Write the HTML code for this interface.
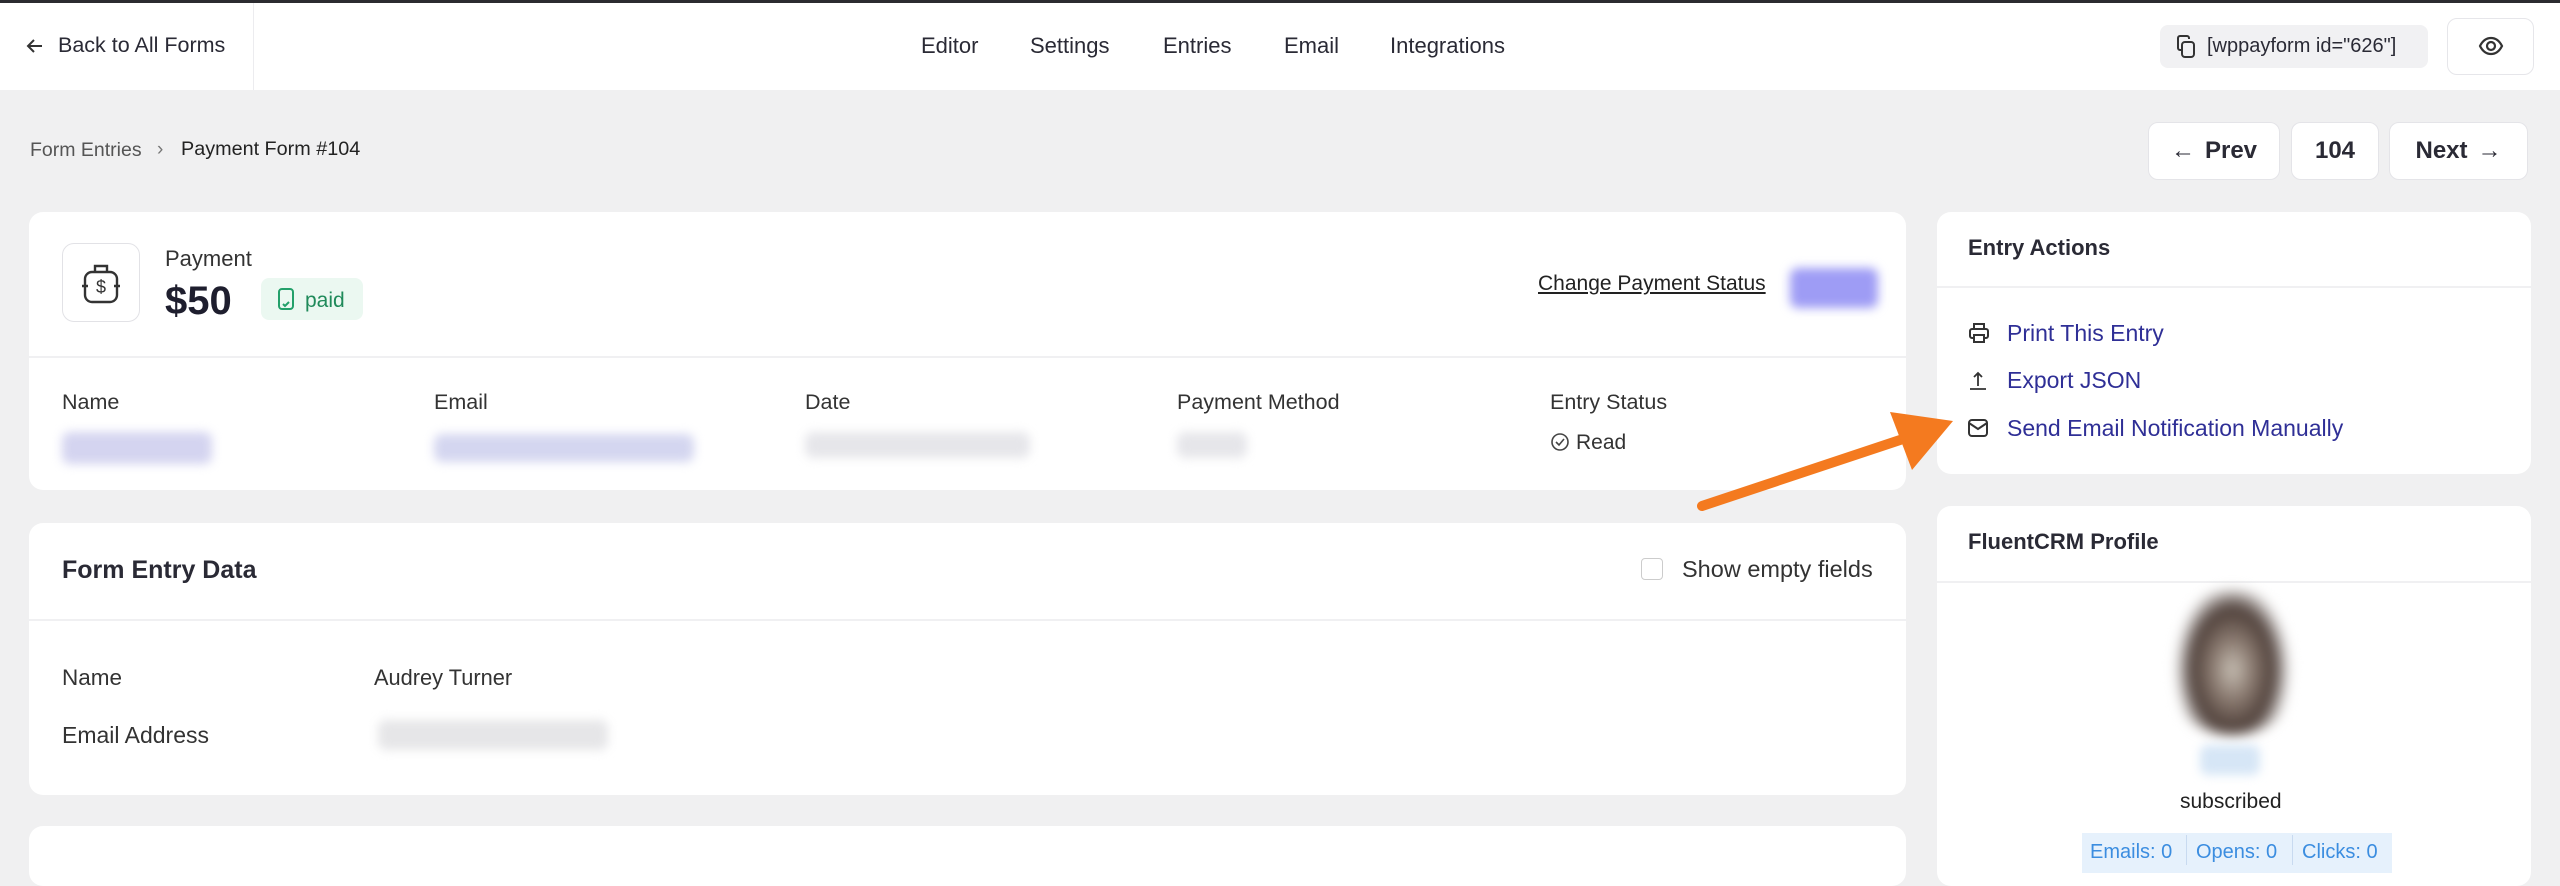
<!DOCTYPE html>
<html><head><meta charset="utf-8"><style>
*{box-sizing:border-box;margin:0;padding:0}
body{width:2560px;height:862px;overflow:hidden;background:#f0f0f1;font-family:"Liberation Sans",sans-serif;color:#1e1e2a;position:relative}
.a{position:absolute}
.card{position:absolute;background:#fff;border-radius:14px}
.t{position:absolute;white-space:nowrap;line-height:1}
.blur{position:absolute;border-radius:8px;filter:blur(5px)}
.btn{position:absolute;background:#fff;border:1.5px solid #e4e4e8;border-radius:10px;font-size:24px;font-weight:bold;color:#2a2a35;display:flex;align-items:center;justify-content:center;gap:10px}
.lnk{color:#2f2f96;font-size:23px}
</style></head><body>
<div class="a" style="left:0;top:0;width:2560px;height:3px;background:#2b2b30"></div>
<div class="a" style="left:0;top:3px;width:2560px;height:87px;background:#fff"></div>
<div class="a" style="left:253px;top:3px;width:1px;height:87px;background:#ececef"></div>
<svg class="a" style="left:26px;top:38px" width="18" height="16" viewBox="0 0 18 16"><path d="M8 2 2 8l6 6M2 8h14" stroke="#333" stroke-width="2" fill="none"/></svg>
<div class="t" style="left:58px;top:35px;font-size:21.5px;color:#2a2a35">Back to All Forms</div>
<div class="t" style="left:921px;top:35px;font-size:22px;color:#2a2a35">Editor</div>
<div class="t" style="left:1030px;top:35px;font-size:22px;color:#2a2a35">Settings</div>
<div class="t" style="left:1163px;top:35px;font-size:22px;color:#2a2a35">Entries</div>
<div class="t" style="left:1284px;top:35px;font-size:22px;color:#2a2a35">Email</div>
<div class="t" style="left:1390px;top:35px;font-size:22px;color:#2a2a35">Integrations</div>
<div class="a" style="left:2160px;top:25px;width:268px;height:43px;background:#f1f1f3;border-radius:8px"></div>
<svg class="a" style="left:2175px;top:34px" width="22" height="26" viewBox="0 0 22 26"><rect x="7" y="8" width="12" height="15" rx="3" fill="none" stroke="#333" stroke-width="2"/><path d="M14 5V4a2 2 0 0 0-2-2H5a2 2 0 0 0-2 2v10a2 2 0 0 0 2 2h2" fill="none" stroke="#333" stroke-width="2"/></svg>
<div class="t" style="left:2207px;top:36px;font-size:20px;color:#2a2a35">[wppayform id="626"]</div>
<div class="a" style="left:2447px;top:18px;width:87px;height:57px;background:#fff;border:1.5px solid #e6e6ea;border-radius:10px"></div>
<svg class="a" style="left:2478px;top:33px" width="26" height="26" viewBox="0 0 26 26"><path d="M2 13C5 7 9 5 13 5s8 2 11 8c-3 6-7 8-11 8s-8-2-11-8z" fill="none" stroke="#333" stroke-width="2.2"/><circle cx="13" cy="13" r="4" fill="none" stroke="#333" stroke-width="2.2"/></svg>

<div class="t" style="left:30px;top:141px;font-size:19.5px;color:#555">Form Entries</div>
<div class="t" style="left:157px;top:140px;font-size:19px;color:#777">›</div>
<div class="t" style="left:181px;top:140px;font-size:19.8px;color:#222">Payment Form #104</div>

<div class="btn" style="left:2148px;top:122px;width:132px;height:58px"><span style="font-weight:normal">←</span><span>Prev</span></div>
<div class="btn" style="left:2291px;top:122px;width:88px;height:58px">104</div>
<div class="btn" style="left:2389px;top:122px;width:139px;height:58px"><span>Next</span><span style="font-weight:normal">→</span></div>

<div class="card" style="left:29px;top:212px;width:1877px;height:278px"></div>
<div class="a" style="left:29px;top:356px;width:1877px;height:2px;background:#f0f0f2"></div>
<div class="a" style="left:62px;top:243px;width:78px;height:79px;border:1.5px solid #e2e2e6;border-radius:12px;background:#fff"></div>
<svg class="a" style="left:80px;top:260px" width="42" height="46" viewBox="0 0 42 46"><path d="M15 12V6h12v6" fill="none" stroke="#333" stroke-width="2.4"/><rect x="5" y="12" width="32" height="30" rx="7" fill="none" stroke="#333" stroke-width="2.4"/><path d="M2 26h6M34 26h6" stroke="#333" stroke-width="2.4"/><text x="21" y="33" font-size="18" text-anchor="middle" font-family="Liberation Sans" fill="#333">$</text></svg>
<div class="t" style="left:165px;top:248px;font-size:22px;color:#333">Payment</div>
<div class="t" style="left:165px;top:281px;font-size:40px;font-weight:bold;color:#1e1e2e">$50</div>
<div class="a" style="left:261px;top:278px;width:102px;height:42px;background:#ebf8f1;border-radius:8px"></div>
<svg class="a" style="left:276px;top:287px" width="20" height="24" viewBox="0 0 20 24"><rect x="3" y="2" width="14" height="20" rx="3" fill="none" stroke="#23a06a" stroke-width="2"/><path d="M7 17l2 2 4-4" fill="none" stroke="#23a06a" stroke-width="2"/></svg>
<div class="t" style="left:305px;top:290px;font-size:21px;color:#1f8a5a">paid</div>
<div class="t" style="left:1538px;top:273px;font-size:21px;color:#222;text-decoration:underline">Change Payment Status</div>
<div class="blur" style="left:1790px;top:268px;width:88px;height:40px;background:#9e9cf5"></div>
<div class="t" style="left:62px;top:392px;font-size:21.5px;color:#333">Name</div>
<div class="t" style="left:434px;top:392px;font-size:21.5px;color:#333">Email</div>
<div class="t" style="left:805px;top:392px;font-size:21.5px;color:#333">Date</div>
<div class="t" style="left:1177px;top:392px;font-size:21.5px;color:#333">Payment Method</div>
<div class="t" style="left:1550px;top:392px;font-size:21.5px;color:#333">Entry Status</div>
<div class="blur" style="left:62px;top:432px;width:150px;height:32px;background:#d4d4f0"></div>
<div class="blur" style="left:434px;top:434px;width:260px;height:28px;background:#d4d6f0"></div>
<div class="blur" style="left:805px;top:432px;width:225px;height:26px;background:#e6e6ea"></div>
<div class="blur" style="left:1177px;top:432px;width:70px;height:26px;background:#e6e6ea"></div>
<svg class="a" style="left:1550px;top:432px" width="20" height="20" viewBox="0 0 20 20"><circle cx="10" cy="10" r="8" fill="none" stroke="#444" stroke-width="1.6"/><path d="M6 10l3 3 5-6" fill="none" stroke="#444" stroke-width="1.6"/></svg>
<div class="t" style="left:1576px;top:432px;font-size:21px;color:#333">Read</div>

<div class="card" style="left:1937px;top:212px;width:594px;height:262px"></div>
<div class="a" style="left:1937px;top:286px;width:594px;height:2px;background:#f0f0f2"></div>
<div class="t" style="left:1968px;top:237px;font-size:22px;font-weight:bold;color:#2a2a35">Entry Actions</div>
<svg class="a" style="left:1968px;top:321px" width="22" height="24" viewBox="0 0 22 24"><path d="M6 8V3h10v5" fill="none" stroke="#333" stroke-width="2"/><rect x="2" y="8" width="18" height="9" rx="2" fill="none" stroke="#333" stroke-width="2"/><rect x="6" y="14" width="10" height="7" fill="#fff" stroke="#333" stroke-width="2"/></svg>
<div class="t lnk" style="left:2007px;top:322px">Print This Entry</div>
<svg class="a" style="left:1968px;top:370px" width="20" height="22" viewBox="0 0 20 22"><path d="M10 16V3M6 7l4-4 4 4M2 19h16" fill="none" stroke="#333" stroke-width="1.8"/></svg>
<div class="t lnk" style="left:2007px;top:369px">Export JSON</div>
<svg class="a" style="left:1967px;top:417px" width="22" height="22" viewBox="0 0 22 22"><rect x="2" y="3" width="18" height="16" rx="3" fill="none" stroke="#333" stroke-width="2"/><path d="M2 6l9 6 9-6" fill="none" stroke="#333" stroke-width="2"/></svg>
<div class="t lnk" style="left:2007px;top:417px">Send Email Notification Manually</div>

<div class="card" style="left:29px;top:523px;width:1877px;height:272px"></div>
<div class="a" style="left:29px;top:619px;width:1877px;height:2px;background:#f0f0f2"></div>
<div class="t" style="left:62px;top:558px;font-size:25px;font-weight:bold;color:#2a2a35">Form Entry Data</div>
<div class="a" style="left:1641px;top:558px;width:22px;height:22px;border:1.5px solid #ccc;border-radius:4px;background:#fff"></div>
<div class="t" style="left:1682px;top:558px;font-size:23.5px;color:#333">Show empty fields</div>
<div class="t" style="left:62px;top:667px;font-size:22.5px;color:#333">Name</div>
<div class="t" style="left:374px;top:667px;font-size:21.8px;color:#333">Audrey Turner</div>
<div class="t" style="left:62px;top:724px;font-size:23px;color:#333">Email Address</div>
<div class="blur" style="left:378px;top:720px;width:230px;height:30px;background:#e6e6e8"></div>

<div class="card" style="left:29px;top:826px;width:1877px;height:60px"></div>

<div class="card" style="left:1937px;top:506px;width:594px;height:380px"></div>
<div class="a" style="left:1937px;top:581px;width:594px;height:2px;background:#f0f0f2"></div>
<div class="t" style="left:1968px;top:531px;font-size:22px;font-weight:bold;color:#2a2a35">FluentCRM Profile</div>
<div class="a" style="left:2160px;top:590px;width:145px;height:145px;border-radius:50%;background:radial-gradient(ellipse 40% 60% at 50% 55%,#c8c0b5 0,#8a7a70 35%,#4e3f39 70%,#fff 100%);filter:blur(6px)"></div>
<div class="blur" style="left:2200px;top:745px;width:60px;height:30px;background:#d6e6f6"></div>
<div class="t" style="left:2180px;top:791px;font-size:21px;color:#222">subscribed</div>
<div class="a" style="left:2082px;top:833px;width:310px;height:40px;background:#e6f1fc"></div>
<div class="t" style="left:2090px;top:842px;font-size:20px;color:#3b8de0">Emails: 0</div>
<div class="a" style="left:2186px;top:835px;width:1px;height:30px;background:#c8daf0"></div>
<div class="t" style="left:2196px;top:842px;font-size:20px;color:#3b8de0">Opens: 0</div>
<div class="a" style="left:2292px;top:835px;width:1px;height:30px;background:#c8daf0"></div>
<div class="t" style="left:2302px;top:842px;font-size:20px;color:#3b8de0">Clicks: 0</div>

<svg class="a" style="left:0;top:0" width="2560" height="862"><line x1="1702" y1="506" x2="1900" y2="440" stroke="#f47a1f" stroke-width="10" stroke-linecap="round"/><polygon points="1953,421 1890,412 1912,470" fill="#f47a1f"/></svg>
</body></html>
